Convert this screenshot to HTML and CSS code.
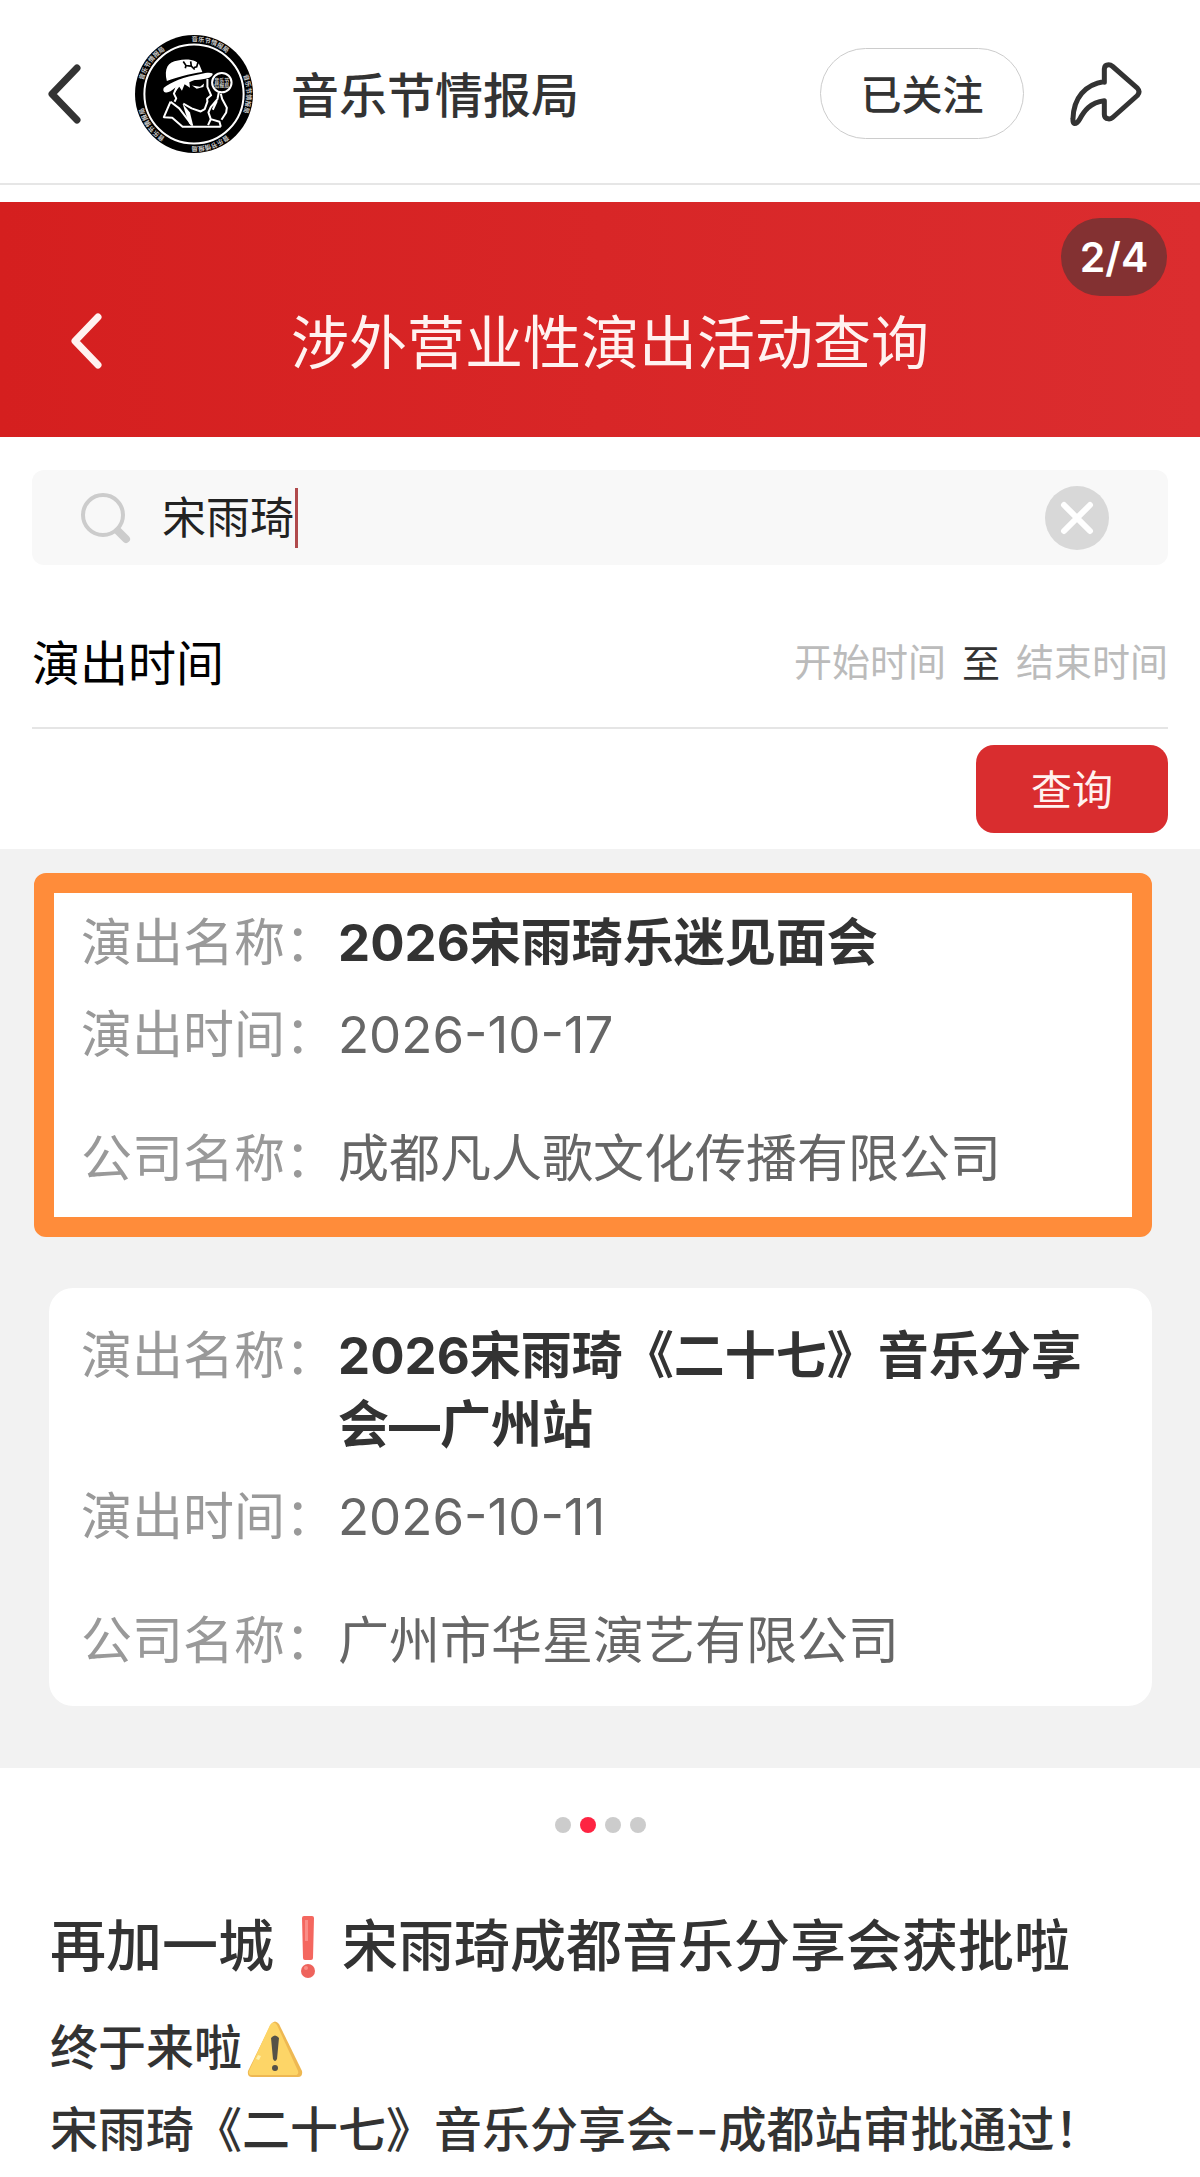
FILE: index.html
```html
<!DOCTYPE html>
<html lang="zh-CN">

<head>
    <meta charset="UTF-8">
    <meta name="viewport" content="width=device-width, initial-scale=1.0">
    <link rel="stylesheet" href="styles.css">
    <title>音乐节情报局</title>
</head>

<body>
    <header class="topbar">
        <button class="icon-btn back" type="button" aria-label="返回">
            <svg width="34" height="60" viewBox="0 0 34 60">
                <path d="M30 4 L5 30 L30 56" />
            </svg>
        </button>
        <svg class="avatar" viewBox="44 31 352 352" aria-hidden="true">
            <defs>
                <path id="ring" d="M109 96 A157 157 0 0 1 331 96" />
            </defs>
            <circle cx="220" cy="207" r="176" />
            <circle class="line" cx="220" cy="207" r="148" />
            <g class="ring-text">
                <text transform="rotate(18 220 207)"><textPath href="#ring" startOffset="50%">音乐节情报局</textPath></text>
                <text transform="rotate(90 220 207)"><textPath href="#ring" startOffset="50%">音乐节情报局</textPath></text>
                <text transform="rotate(162 220 207)"><textPath href="#ring" startOffset="50%">音乐节情报局</textPath></text>
                <text transform="rotate(234 220 207)"><textPath href="#ring" startOffset="50%">音乐节情报局</textPath></text>
                <text transform="rotate(306 220 207)"><textPath href="#ring" startOffset="50%">音乐节情报局</textPath></text>
            </g>
            <!-- hat -->
            <path class="fill" d="M139 168 C130 132 142 110 172 107 C204 99 234 108 238 124 L245 141 C205 146 165 158 139 168 Z" />
            <path class="fill" d="M130 188 C150 172 190 155 240 147 C264 141 280 143 275 150 C268 162 245 163 215 166 C188 170 166 186 150 199 C138 206 124 202 130 188 Z" />
            <path class="ink" d="M188 110 L196 122 L210 124 M210 110 L212 124 L222 134 M232 112 L228 126 L220 128 M196 122 L194 130" />
            <!-- hair and face -->
            <path class="fill" d="M160 206 L166 182 L196 166 L232 160 L206 172 L208 188 L192 178 L184 197 L176 185 Z" />
            <path class="fill" d="M214 182 L238 185 L250 176 L248 186 L228 191 Z" />
            <path class="line" d="M260 162 L260 186 L271 211 L259 221 L260 230 L252 252 L240 259 L213 250 L188 236 M168 188 L160 206 L167 220 L162 230" />
            <!-- coat -->
            <path class="line" d="M150 230 L130 276 L155 278 L186 305 L300 305 M150 230 L176 250 L214 300" />
            <path class="fill" d="M186 236 L208 262 L218 303 L206 296 L194 262 Z" />
            <!-- magnifier and hand -->
            <circle class="line" cx="303" cy="173" r="29" />
            <path class="line" d="M294 202 L290 222 L270 246 L263 262 L270 282 M300 206 L304 222 L318 248 L316 262 L302 284 M262 300 L270 282 L296 290 L300 305 M288 228 L276 254" />
            <text class="lens-text" x="303" y="171">音乐节</text>
            <text class="lens-text" x="303" y="187">情报局</text>
        </svg>
        <h1 class="author">音乐节情报局</h1>
        <button class="follow" type="button">已关注</button>
        <button class="icon-btn share" type="button" aria-label="分享">
            <svg width="72" height="67" viewBox="870 115 216 200">
                <path d="M973 181 V141 Q974 129 986 129 Q992 129 998 134 L1072 199 Q1082 210 1072 221 L998 287 Q991 292 985 291 Q973 290 973 278 V237 C930 242 912 268 898 294 Q891 306 883 305 Q878 303 879 290 C881 228 915 188 973 179 Z" />
            </svg>
        </button>
    </header>

    <main>
        <section class="slide">
            <div class="banner">
                <button class="icon-btn banner-back" type="button" aria-label="返回">
                    <svg width="32" height="56" viewBox="0 0 32 56">
                        <path d="M28 4 L5 28 L28 52" />
                    </svg>
                </button>
                <h2>涉外营业性演出活动查询</h2>
                <span class="counter">2/4</span>
            </div>

            <form class="query">
                <div class="search">
                    <svg class="search-icon" width="52" height="52" viewBox="0 0 52 52">
                        <circle cx="23" cy="23" r="20" />
                        <path class="handle" d="M38 39 L46 47" />
                    </svg>
                    <div class="search-field">
                        <input type="text" value="宋雨琦" aria-label="演出名称">
                        <span class="caret"></span>
                    </div>
                    <button class="icon-btn clear" type="button" aria-label="清除">
                        <svg width="64" height="64" viewBox="0 0 64 64">
                            <circle cx="32" cy="32" r="32" />
                            <path d="M19 19 L45 45 M45 19 L19 45" />
                        </svg>
                    </button>
                </div>
                <div class="dates">
                    <label for="start">演出时间</label>
                    <input type="text" id="start" placeholder="开始时间">
                    <span>至</span>
                    <input type="text" id="end" placeholder="结束时间" aria-label="结束时间">
                </div>
                <button class="submit" type="button">查询</button>
            </form>

            <div class="results">
                <dl class="card marked">
                    <div class="row">
                        <dt>演出名称：</dt>
                        <dd class="name">2026宋雨琦乐迷见面会</dd>
                    </div>
                    <div class="row">
                        <dt>演出时间：</dt>
                        <dd>2026-10-17</dd>
                    </div>
                    <div class="row company">
                        <dt>公司名称：</dt>
                        <dd>成都凡人歌文化传播有限公司</dd>
                    </div>
                </dl>
                <dl class="card">
                    <div class="row">
                        <dt>演出名称：</dt>
                        <dd class="name">2026宋雨琦《二十七》音乐分享会—广州站</dd>
                    </div>
                    <div class="row">
                        <dt>演出时间：</dt>
                        <dd>2026-10-11</dd>
                    </div>
                    <div class="row company">
                        <dt>公司名称：</dt>
                        <dd>广州市华星演艺有限公司</dd>
                    </div>
                </dl>
            </div>
        </section>

        <div class="dots">
            <span></span>
            <span class="active"></span>
            <span></span>
            <span></span>
        </div>

        <article class="post">
            <h2>再加一城<svg class="emoji" width="68" height="64" viewBox="0 0 68 64" role="img" aria-label="❗">
                    <path fill="#f4675f" d="M28 3 Q28 1 30 1 H38 Q40 1 40 3 L39 43 Q39 45 37 45 H31 Q29 45 29 43 Z" />
                    <path fill="#f98d86" d="M31 5 H34 V26 H31 Z" />
                    <circle fill="#ee635c" cx="34" cy="56" r="7" />
                    <circle fill="#f98d86" cx="32" cy="53" r="2" />
                </svg>宋雨琦成都音乐分享会获批啦</h2>
            <p>终于来啦<svg class="emoji" width="62" height="58" viewBox="-4 0 62 58" role="img" aria-label="⚠️">
                    <path fill="#eeb852" d="M25 4 Q29 -1 33 4 L56 51 Q57 57 52 57 H6 Q1 57 2 51 Z" />
                    <path fill="#fdd567" d="M24 5 Q28 0 31 5 L52 51 Q53 55 49 55 H6 Q2 55 3 51 Z" />
                    <path fill="#fff0a8" d="M12 35 L15 36 L13 40 L10 39 Z" />
                    <path fill="#555147" d="M25 18 Q29 13 33 18 L31 39 Q29 43 27 39 Z" />
                    <circle fill="#555147" cx="29" cy="48" r="3" />
                </svg></p>
            <p>宋雨琦《二十七》音乐分享会--成都站审批通过！</p>
        </article>
    </main>
</body>

</html>
```
FILE: styles.css
```css
* {
    margin: 0;
    padding: 0;
    box-sizing: border-box;
}

body {
    background-color: #fff;
    color: #333;
    font-family: Inter, "Noto Sans CJK SC", sans-serif;
}

button,
input {
    border: none;
    background: none;
    font-family: inherit;
    outline: none;
}

button {
    cursor: pointer;
}

.icon-btn {
    display: flex;
}

.icon-btn path {
    fill: none;
    stroke: #333;
    stroke-linecap: round;
    stroke-linejoin: round;
}

/* top bar */
.topbar {
    display: flex;
    align-items: center;
    height: 185px;
    padding: 4px 58px 0 47px;
    border-bottom: 2px solid #e6e6e6;
}

.back path {
    stroke-width: 7;
}

.avatar {
    width: 118px;
    height: 118px;
    margin: 0 38px 0 54px;
}

.avatar .line {
    fill: none;
    stroke: #fff;
    stroke-width: 6;
    stroke-linejoin: round;
}

.avatar .fill {
    fill: #fff;
}

.avatar .ink {
    fill: none;
    stroke: #000;
    stroke-width: 5;
}

.ring-text,
.lens-text {
    fill: #ccc;
    font-size: 19px;
    font-weight: 700;
    text-anchor: middle;
}

.lens-text {
    font-size: 15px;
}

.author {
    flex: 1;
    padding-bottom: 4px;
    font-size: 48px;
    font-weight: 500;
}

.follow {
    width: 204px;
    height: 91px;
    margin-right: 46px;
    padding-bottom: 4px;
    border: 1px solid #ccc;
    border-radius: 46px;
    color: #333;
    font-size: 41px;
    font-weight: 500;
}

.share path {
    stroke-width: 15px;
}

/* slide header */
.slide {
    margin-top: 17px;
}

.banner {
    position: relative;
    display: flex;
    align-items: center;
    justify-content: center;
    height: 235px;
    padding: 42px 70px 0;
    background: linear-gradient(to right, #d51f1f, #db2d2f);
    color: #fff2f0;
}

.banner h2 {
    flex: 1;
    padding: 0 12px 4px 0;
    font-size: 58px;
    font-weight: 400;
    text-align: center;
}

.banner-back path {
    stroke: #fff2f0;
    stroke-width: 7;
}

.counter {
    position: absolute;
    top: 16px;
    right: 33px;
    width: 106px;
    border-radius: 39px;
    background-color: #833132;
    color: #fff;
    font-size: 41px;
    font-weight: 600;
    line-height: 78px;
    text-align: center;
}

/* query form */
.query {
    display: flex;
    flex-direction: column;
    padding: 33px 32px 16px;
}

.search {
    display: flex;
    align-items: center;
    height: 95px;
    padding: 0 59px 0 48px;
    border-radius: 12px;
    background-color: #f8f8f8;
}

.search-icon {
    fill: none;
    stroke: #ccc;
    stroke-width: 4;
}

.search-icon .handle {
    stroke-width: 8;
    stroke-linecap: round;
}

.search-field {
    position: relative;
    flex: 1;
    margin-left: 30px;
}

.search-field input {
    width: 100%;
    color: #222;
    font-size: 44px;
    line-height: 64px;
}

.caret {
    position: absolute;
    top: 2px;
    left: 133px;
    width: 3px;
    height: 60px;
    background-color: #b04a4c;
}

.clear circle {
    fill: #d8d8d8;
}

.clear path {
    stroke: #fff;
    stroke-width: 6;
}

.dates {
    display: flex;
    align-items: center;
    gap: 16px;
    height: 164px;
    padding-top: 32px;
    border-bottom: 2px solid #e5e5e5;
    font-size: 38px;
}

.dates label,
.dates span {
    padding-bottom: 4px;
}

.dates label {
    flex: 1;
    color: #000;
    font-size: 48px;
}

.dates input {
    width: 152px;
    font-size: 38px;
}

.dates input::placeholder {
    color: #bbb;
}

.submit {
    align-self: flex-end;
    width: 192px;
    height: 88px;
    margin-top: 16px;
    padding-bottom: 4px;
    border-radius: 18px;
    background-color: #d92d2f;
    color: #fff2f0;
    font-size: 41px;
}

/* results */
.results {
    display: flex;
    flex-direction: column;
    gap: 51px;
    padding: 24px 48px 62px 34px;
    background-color: #f2f2f2;
}

.card {
    display: flex;
    flex-direction: column;
    gap: 23px;
    margin-left: 15px;
    padding: 33px 40px 31px 32px;
    border-radius: 24px;
    background-color: #fff;
    font-size: 51px;
    line-height: 69px;
}

.marked {
    margin-left: 0;
    padding: 15px 27px 24px;
    border: 20px solid #ff8c3a;
    border-radius: 12px;
}

.row {
    display: flex;
    gap: 2px;
}

.company {
    margin-top: 32px;
}

.row dt {
    flex-shrink: 0;
    color: #999;
}

.row dd {
    color: #666;
}

.row .name {
    color: #333;
    font-weight: 700;
}

.dots {
    display: flex;
    justify-content: center;
    gap: 9px;
    padding: 49px 0;
}

.dots span {
    width: 16px;
    height: 16px;
    border-radius: 50%;
    background-color: #ccc;
}

.dots .active {
    background-color: #fe2442;
}

/* post text */
.post {
    padding: 8px 50px 5px;
    font-size: 48px;
    font-weight: 500;
    line-height: 82px;
}

.post h2 {
    margin-bottom: 5px;
    font-size: 56px;
    font-weight: 500;
    line-height: 112px;
}

.emoji {
    vertical-align: -13px;
}
```
